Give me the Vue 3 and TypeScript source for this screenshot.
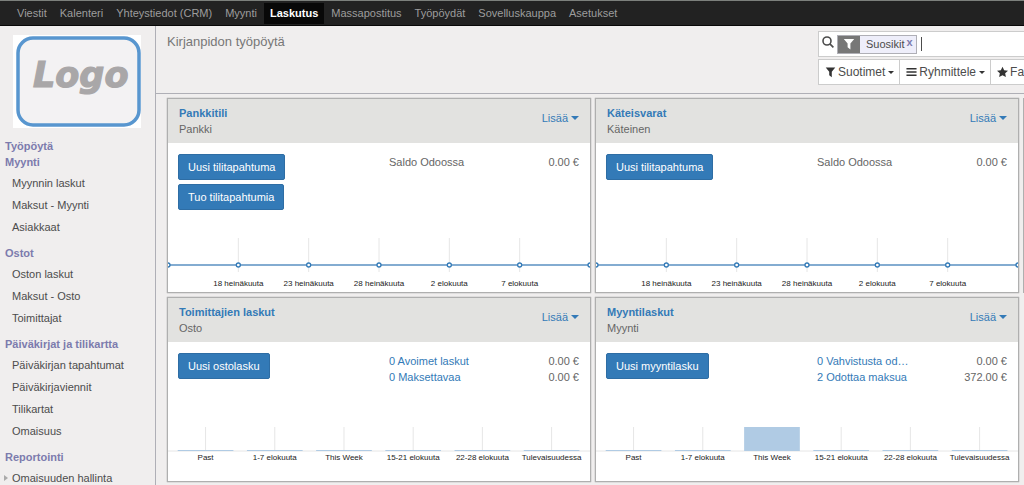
<script setup lang="ts">
interface MenuSection {
  title: string
  items: { label: string; expandable?: boolean }[]
}

interface Journal {
  title: string
  type: string
  actions: string[]
  rows: { label: string; amount: string; link: boolean }[]
  chart: 'line' | 'bar'
  values: number[]
}

const apps: string[] = [
  'Viestit', 'Kalenteri', 'Yhteystiedot (CRM)', 'Myynti', 'Laskutus',
  'Massapostitus', 'Työpöydät', 'Sovelluskauppa', 'Asetukset',
]
const activeApp = 'Laskutus'

const sections: MenuSection[] = [
  { title: 'Työpöytä', items: [] },
  { title: 'Myynti', items: [{ label: 'Myynnin laskut' }, { label: 'Maksut - Myynti' }, { label: 'Asiakkaat' }] },
  { title: 'Ostot', items: [{ label: 'Oston laskut' }, { label: 'Maksut - Osto' }, { label: 'Toimittajat' }] },
  {
    title: 'Päiväkirjat ja tilikartta',
    items: [
      { label: 'Päiväkirjan tapahtumat' }, { label: 'Päiväkirjaviennit' },
      { label: 'Tilikartat' }, { label: 'Omaisuus' },
    ],
  },
  { title: 'Reportointi', items: [{ label: 'Omaisuuden hallinta', expandable: true }] },
]

const journals: Journal[] = [
  {
    title: 'Pankkitili', type: 'Pankki', actions: ['Uusi tilitapahtuma', 'Tuo tilitapahtumia'],
    rows: [{ label: 'Saldo Odoossa', amount: '0.00 €', link: false }], chart: 'line', values: [],
  },
  {
    title: 'Käteisvarat', type: 'Käteinen', actions: ['Uusi tilitapahtuma'],
    rows: [{ label: 'Saldo Odoossa', amount: '0.00 €', link: false }], chart: 'line', values: [],
  },
  {
    title: 'Toimittajien laskut', type: 'Osto', actions: ['Uusi ostolasku'],
    rows: [
      { label: '0 Avoimet laskut', amount: '0.00 €', link: true },
      { label: '0 Maksettavaa', amount: '0.00 €', link: true },
    ],
    chart: 'bar', values: [0, 0, 0, 0, 0, 0],
  },
  {
    title: 'Myyntilaskut', type: 'Myynti', actions: ['Uusi myyntilasku'],
    rows: [
      { label: '0 Vahvistusta od…', amount: '0.00 €', link: true },
      { label: '2 Odottaa maksua', amount: '372.00 €', link: true },
    ],
    chart: 'bar', values: [0, 0, 372, 0, 0, 0],
  },
]

const days: string[] = ['18 heinäkuuta', '23 heinäkuuta', '28 heinäkuuta', '2 elokuuta', '7 elokuuta']
const weeks: string[] = ['Past', '1-7 elokuuta', 'This Week', '15-21 elokuuta', '22-28 elokuuta', 'Tulevaisuudessa']

const dayX = (i: number): string => `${(i * 100) / 6}%`
const weekX = (i: number): string => `${8.9 + i * 16.4}%`
const barX = (i: number): string => `${2.3 + i * 16.4}%`
const barHeight = (v: number): number => Math.max(1, (v / 372) * 24)
</script>

<template>
  <div class="client">
    <nav class="topbar">
      <a v-for="app in apps" :key="app" href="#" :class="['app', { active: app === activeApp }]">{{ app }}</a>
    </nav>

    <div class="workspace">
      <aside class="sidebar">
        <svg class="logo" viewBox="0 0 128 93" role="img" aria-label="Logo">
          <rect width="128" height="93" fill="#fff" />
          <rect x="5" y="3" width="121" height="87" rx="15" fill="#f3f2f3" stroke="#5896cf" stroke-width="3.5" />
          <text x="20" y="52" class="logo-text">Logo</text>
        </svg>
        <div v-for="section in sections" :key="section.title" class="section">
          <a href="#" class="section-title">{{ section.title }}</a>
          <ul v-if="section.items.length" class="items">
            <li v-for="item in section.items" :key="item.label">
              <a href="#" class="item">
                <svg v-if="item.expandable" class="expand" viewBox="0 0 4 6" aria-hidden="true"><path d="M0 0L4 3L0 6Z" /></svg>{{ item.label }}
              </a>
            </li>
          </ul>
        </div>
      </aside>

      <main class="main">
        <header class="control-panel">
          <h1 class="title">Kirjanpidon työpöytä</h1>
          <div class="search-area">
            <div class="search">
              <svg class="magnifier" viewBox="0 0 12 12" aria-hidden="true">
                <circle cx="5" cy="5" r="4" /><path d="M7.9 7.9L11.4 11.4" />
              </svg>
              <span class="facet">
                <span class="facet-icon">
                  <svg viewBox="0 0 12 12" aria-hidden="true"><path d="M0.8 1H11.2L7.4 5.6V11.4L4.6 9.2V5.6Z" /></svg>
                </span>
                <span class="facet-label">Suosikit</span>
                <button type="button" class="facet-remove">x</button>
              </span>
              <input class="search-input" type="text" aria-label="Haku" />
            </div>
            <div class="filters">
              <button type="button" class="filter">
                <svg class="icon" viewBox="0 0 12 12" aria-hidden="true"><path d="M0.8 1H11.2L7.4 5.6V11.6L4.6 9.6V5.6Z" /></svg>
                Suotimet
                <svg class="caret" viewBox="0 0 6 3" aria-hidden="true"><path d="M0 0H6L3 3Z" /></svg>
              </button>
              <button type="button" class="filter">
                <svg class="icon" viewBox="0 0 12 12" aria-hidden="true"><path d="M0.5 1.6H11.5V3.4H0.5ZM0.5 5.1H11.5V6.9H0.5ZM0.5 8.6H11.5V10.4H0.5Z" /></svg>
                Ryhmittele
                <svg class="caret" viewBox="0 0 6 3" aria-hidden="true"><path d="M0 0H6L3 3Z" /></svg>
              </button>
              <button type="button" class="filter">
                <svg class="icon" viewBox="0 0 12 12" aria-hidden="true"><path d="M6 0.2L7.8 4L12 4.5L8.9 7.4L9.7 11.5L6 9.5L2.3 11.5L3.1 7.4L0 4.5L4.2 4Z" /></svg>
                Fa
              </button>
            </div>
          </div>
        </header>

        <div class="board">
          <template v-for="(journal, index) in journals" :key="journal.title">
            <article class="card">
              <header class="card-header">
                <div>
                  <a href="#" class="card-title">{{ journal.title }}</a>
                  <div class="card-type">{{ journal.type }}</div>
                </div>
                <button type="button" class="more">
                  Lisää
                  <svg class="more-caret" viewBox="0 0 8 4" aria-hidden="true"><path d="M0 0H8L4 4Z" /></svg>
                </button>
              </header>
              <div class="summary">
                <div class="actions">
                  <button v-for="action in journal.actions" :key="action" type="button" class="primary">{{ action }}</button>
                </div>
                <div class="figures">
                  <div v-for="row in journal.rows" :key="row.label" class="figure">
                    <a v-if="row.link" href="#">{{ row.label }}</a>
                    <span v-else>{{ row.label }}</span>
                    <span>{{ row.amount }}</span>
                  </div>
                </div>
              </div>
              <svg v-if="journal.chart === 'line'" class="chart line-chart">
                <line v-for="(day, i) in days" :key="day" class="grid" :x1="dayX(i + 1)" :x2="dayX(i + 1)" y1="16" y2="50" />
                <line class="series" x1="0" x2="100%" y1="43" y2="43" />
                <circle v-for="n in 7" :key="n" class="point" :cx="dayX(n - 1)" cy="43" r="2" />
                <text v-for="(day, i) in days" :key="day" :x="dayX(i + 1)" y="64">{{ day }}</text>
              </svg>
              <svg v-else class="chart bar-chart">
                <line class="grid" x1="0" x2="100%" y1="30" y2="30" />
                <line v-for="(week, i) in weeks" :key="week" class="grid" :x1="weekX(i)" :x2="weekX(i)" y1="6" y2="30" />
                <rect
                  v-for="(value, i) in journal.values" :key="i" class="bar"
                  :x="barX(i)" :y="30 - barHeight(value)" width="13.2%" :height="barHeight(value)"
                />
                <text v-for="(week, i) in weeks" :key="week" :x="weekX(i)" y="39">{{ week }}</text>
              </svg>
            </article>
            <div v-if="index === 1" class="next-column"></div>
          </template>
        </div>
      </main>
    </div>
  </div>
</template>

<style>
body {
  margin: 0;
  background: #f0eeee;
}
</style>

<style scoped>
.client {
  height: 100vh;
  display: flex;
  flex-direction: column;
  overflow: hidden;
  font: 11px/16px "Liberation Sans", Arial, sans-serif;
  color: #4c4c4c;
  background: #f0eeee;
}
a {
  text-decoration: none;
  color: #337ab7;
}
button {
  font: inherit;
  color: inherit;
  margin: 0;
  white-space: nowrap;
}
.topbar {
  display: flex;
  align-items: center;
  gap: 1px;
  padding: 2px 11px 1px;
  background: #222;
  border-top: 1px solid #7c807c;
  border-bottom: 1px solid #080808;
  flex: none;
}
.app {
  padding: 0 6px;
  line-height: 21px;
  color: #9d9d9d;
}
.app.active {
  background: #080808;
  color: #fff;
  font-weight: bold;
}
.workspace {
  flex: 1;
  display: flex;
  min-height: 0;
}
.sidebar {
  flex: 0 0 155px;
  border-right: 1px solid #afafb6;
  overflow: hidden;
}
.logo {
  display: block;
  width: 128px;
  margin: 9px 0 10px 13px;
}
.logo-text {
  font: italic bold 35px "DejaVu Sans", sans-serif;
  fill: #a9a7a8;
  stroke: #a9a7a8;
  stroke-width: 1.2;
}
.section {
  padding-left: 5px;
}
.section-title {
  display: block;
  font-weight: bold;
  color: #7c7bad;
}
.items {
  list-style: none;
  margin: 0;
  padding: 2px 0 7px 7px;
}
.item {
  position: relative;
  display: block;
  line-height: 22px;
  color: #4c4c4c;
}
.expand {
  position: absolute;
  left: -8px;
  top: 8px;
  width: 4px;
  height: 6px;
  fill: #aaa;
}
.main {
  flex: 1;
  min-width: 0;
  overflow: hidden;
}
.control-panel {
  display: flex;
  justify-content: space-between;
  height: 67px;
  border-bottom: 1px solid #afafb6;
}
.title {
  margin: 8px 0 0 11px;
  font-size: 13px;
  line-height: 16px;
  font-weight: normal;
  color: #777;
}
.search-area {
  flex: 0 0 206px;
  padding-top: 5px;
  overflow: hidden;
}
.search {
  display: flex;
  align-items: center;
  height: 24px;
  padding-left: 3px;
  background: #fff;
  border: 1px solid #ccc;
  border-right: 0;
}
.magnifier {
  width: 12px;
  height: 12px;
  margin: 0 3px 4px 0;
  fill: none;
  stroke: #4c4c4c;
  stroke-width: 1.6;
}
.facet {
  display: flex;
  height: 17px;
  border: 1px solid #afafb6;
  background: #eeeefa;
}
.facet-icon {
  display: flex;
  align-items: center;
  justify-content: center;
  width: 22px;
  background: #777;
}
.facet-icon svg {
  width: 12px;
  height: 12px;
  fill: #fff;
}
.facet-label {
  padding-left: 6px;
  font-size: 11px;
  line-height: 17px;
}
.facet-remove {
  padding: 0 3px 0 2px;
  border: 0;
  background: none;
  font-weight: bold;
  font-size: 11px;
  line-height: 13px;
  color: #7c7bad;
  align-self: flex-start;
}
.search-input {
  flex: 1;
  min-width: 0;
  height: 14px;
  margin-left: 4px;
  padding: 0 2px;
  border: 0;
  border-left: 1px solid #4c4c4c;
  outline: 0;
  font: inherit;
}
.filters {
  display: flex;
  margin-top: 2px;
}
.filter {
  display: flex;
  align-items: center;
  gap: 2px;
  flex: none;
  height: 26px;
  padding: 0 5px 0 6px;
  border: 1px solid #ccc;
  border-right: 0;
  background: #fff;
  font-size: 12px;
}
.icon {
  width: 11px;
  height: 12px;
  fill: #333;
}
.caret {
  width: 6px;
  height: 3px;
  margin-left: 1px;
  fill: #333;
}
.board {
  display: grid;
  grid-template-columns: minmax(0, 1fr) minmax(0, 1fr) 1px;
  gap: 4px;
  padding: 4px 0 4px 11px;
}
.card {
  background: #fff;
  border: 1px solid #afafaf;
  box-shadow: 0 0 1px #888;
}
.next-column {
  background: #afafaf;
}
.card-header {
  display: flex;
  justify-content: space-between;
  align-items: flex-start;
  padding: 6px 11px;
  background: #e2e2e0;
}
.card-title {
  display: block;
  font-weight: bold;
}
.card-type {
  color: #666;
}
.more {
  display: flex;
  align-items: center;
  gap: 3px;
  margin-top: 5px;
  padding: 0;
  border: 0;
  background: none;
  color: #337ab7;
}
.more-caret {
  width: 8px;
  height: 4px;
  fill: #337ab7;
}
.summary {
  display: grid;
  grid-template-columns: 1fr 1fr;
  min-height: 79px;
  box-sizing: border-box;
  padding-top: 11px;
}
.actions {
  display: flex;
  flex-direction: column;
  align-items: flex-start;
  gap: 4px;
  padding-left: 10px;
}
.primary {
  height: 26px;
  padding: 0 9px;
  border: 1px solid #2e6da4;
  border-radius: 2px;
  background: #337ab7;
  color: #fff;
}
.figures {
  padding: 0 11px 0 10px;
}
.figure {
  display: flex;
  justify-content: space-between;
  color: #666;
}
.chart {
  display: block;
  width: 100%;
}
.line-chart {
  height: 70px;
}
.bar-chart {
  height: 60px;
}
.chart text {
  font-size: 8px;
  text-anchor: middle;
  fill: #222;
}
.grid {
  stroke: #e6e6e6;
}
.series {
  stroke: #5a91c2;
  stroke-width: 1.5;
}
.point {
  fill: #fff;
  stroke: #337ab7;
  stroke-width: 1.3;
}
.bar {
  fill: #b0cbe4;
}
</style>
